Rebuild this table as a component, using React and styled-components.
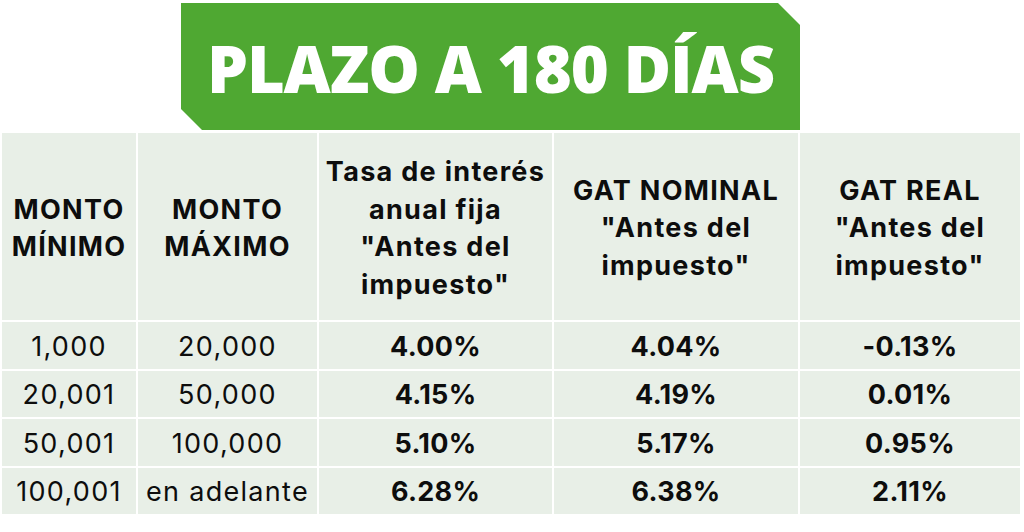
import React from "react";
import styled, { createGlobalStyle } from "styled-components";

const Global = createGlobalStyle`
  html, body { margin: 0; padding: 0; background: #ffffff; }
  body { font-family: Inter, "Noto Sans", Arial, sans-serif; color: #111; }
`;

const Page = styled.div`
  width: 1024px;
  height: 532px;
  padding: 3px 4px 0 2px;
  box-sizing: border-box;
  display: flex;
  flex-direction: column;
  gap: 3px;
`;

const BannerRow = styled.div`
  display: flex;
  padding-left: 179px;
`;

const Banner = styled.div`
  width: 619px;
  height: 127px;
  background: #4fa832;
  clip-path: polygon(0 0, 597px 0, 619px 22px, 619px 100%, 21px 100%, 0 106px);
  display: flex;
  align-items: center;
  justify-content: center;
  color: #ffffff;
  font-family: "Open Sans", Lato, sans-serif;
  font-weight: 800;
  font-size: 65px;
  letter-spacing: -1.1px;
  padding-top: 3px;
  box-sizing: border-box;
`;

const Grid = styled.div`
  display: grid;
  grid-template-columns: 134px 179px 233px 244px 220px;
  grid-template-rows: 187px 47px 46px 47px 46px;
  gap: 2px;
  background: #ffffff;
`;

const Cell = styled.div`
  background: #e8efe7;
  display: flex;
  align-items: center;
  justify-content: center;
  text-align: center;
  font-size: 27px;
  font-weight: ${(p) => (p.$bold ? 700 : 400)};
  letter-spacing: ${(p) => (p.$head ? "1.3px" : p.$bold ? "0.3px" : "1.3px")};
  line-height: ${(p) => (p.$head ? "37.5px" : "1")};
  padding-top: ${(p) => (p.$head ? "3px" : "1px")};
  box-sizing: border-box;
  color: #0d0d0d;
  white-space: pre-line;
`;

const headers = [
  "MONTO\nMÍNIMO",
  "MONTO\nMÁXIMO",
  'Tasa de interés\nanual fija\n"Antes del\nimpuesto"',
  'GAT NOMINAL\n"Antes del\nimpuesto"',
  'GAT REAL\n"Antes del\nimpuesto"',
];

const rows = [
  ["1,000", "20,000", "4.00%", "4.04%", "-0.13%"],
  ["20,001", "50,000", "4.15%", "4.19%", "0.01%"],
  ["50,001", "100,000", "5.10%", "5.17%", "0.95%"],
  ["100,001", "en adelante", "6.28%", "6.38%", "2.11%"],
];

export default function App() {
  return (
    <>
      <Global />
      <Page>
        <BannerRow>
          <Banner>PLAZO A 180 DÍAS</Banner>
        </BannerRow>
        <Grid>
          {headers.map((h, i) => (
            <Cell key={"h" + i} $head $bold>
              {h}
            </Cell>
          ))}
          {rows.map((r, ri) =>
            r.map((v, ci) => (
              <Cell key={ri + "-" + ci} $bold={ci >= 2}>
                {v}
              </Cell>
            ))
          )}
        </Grid>
      </Page>
    </>
  );
}
